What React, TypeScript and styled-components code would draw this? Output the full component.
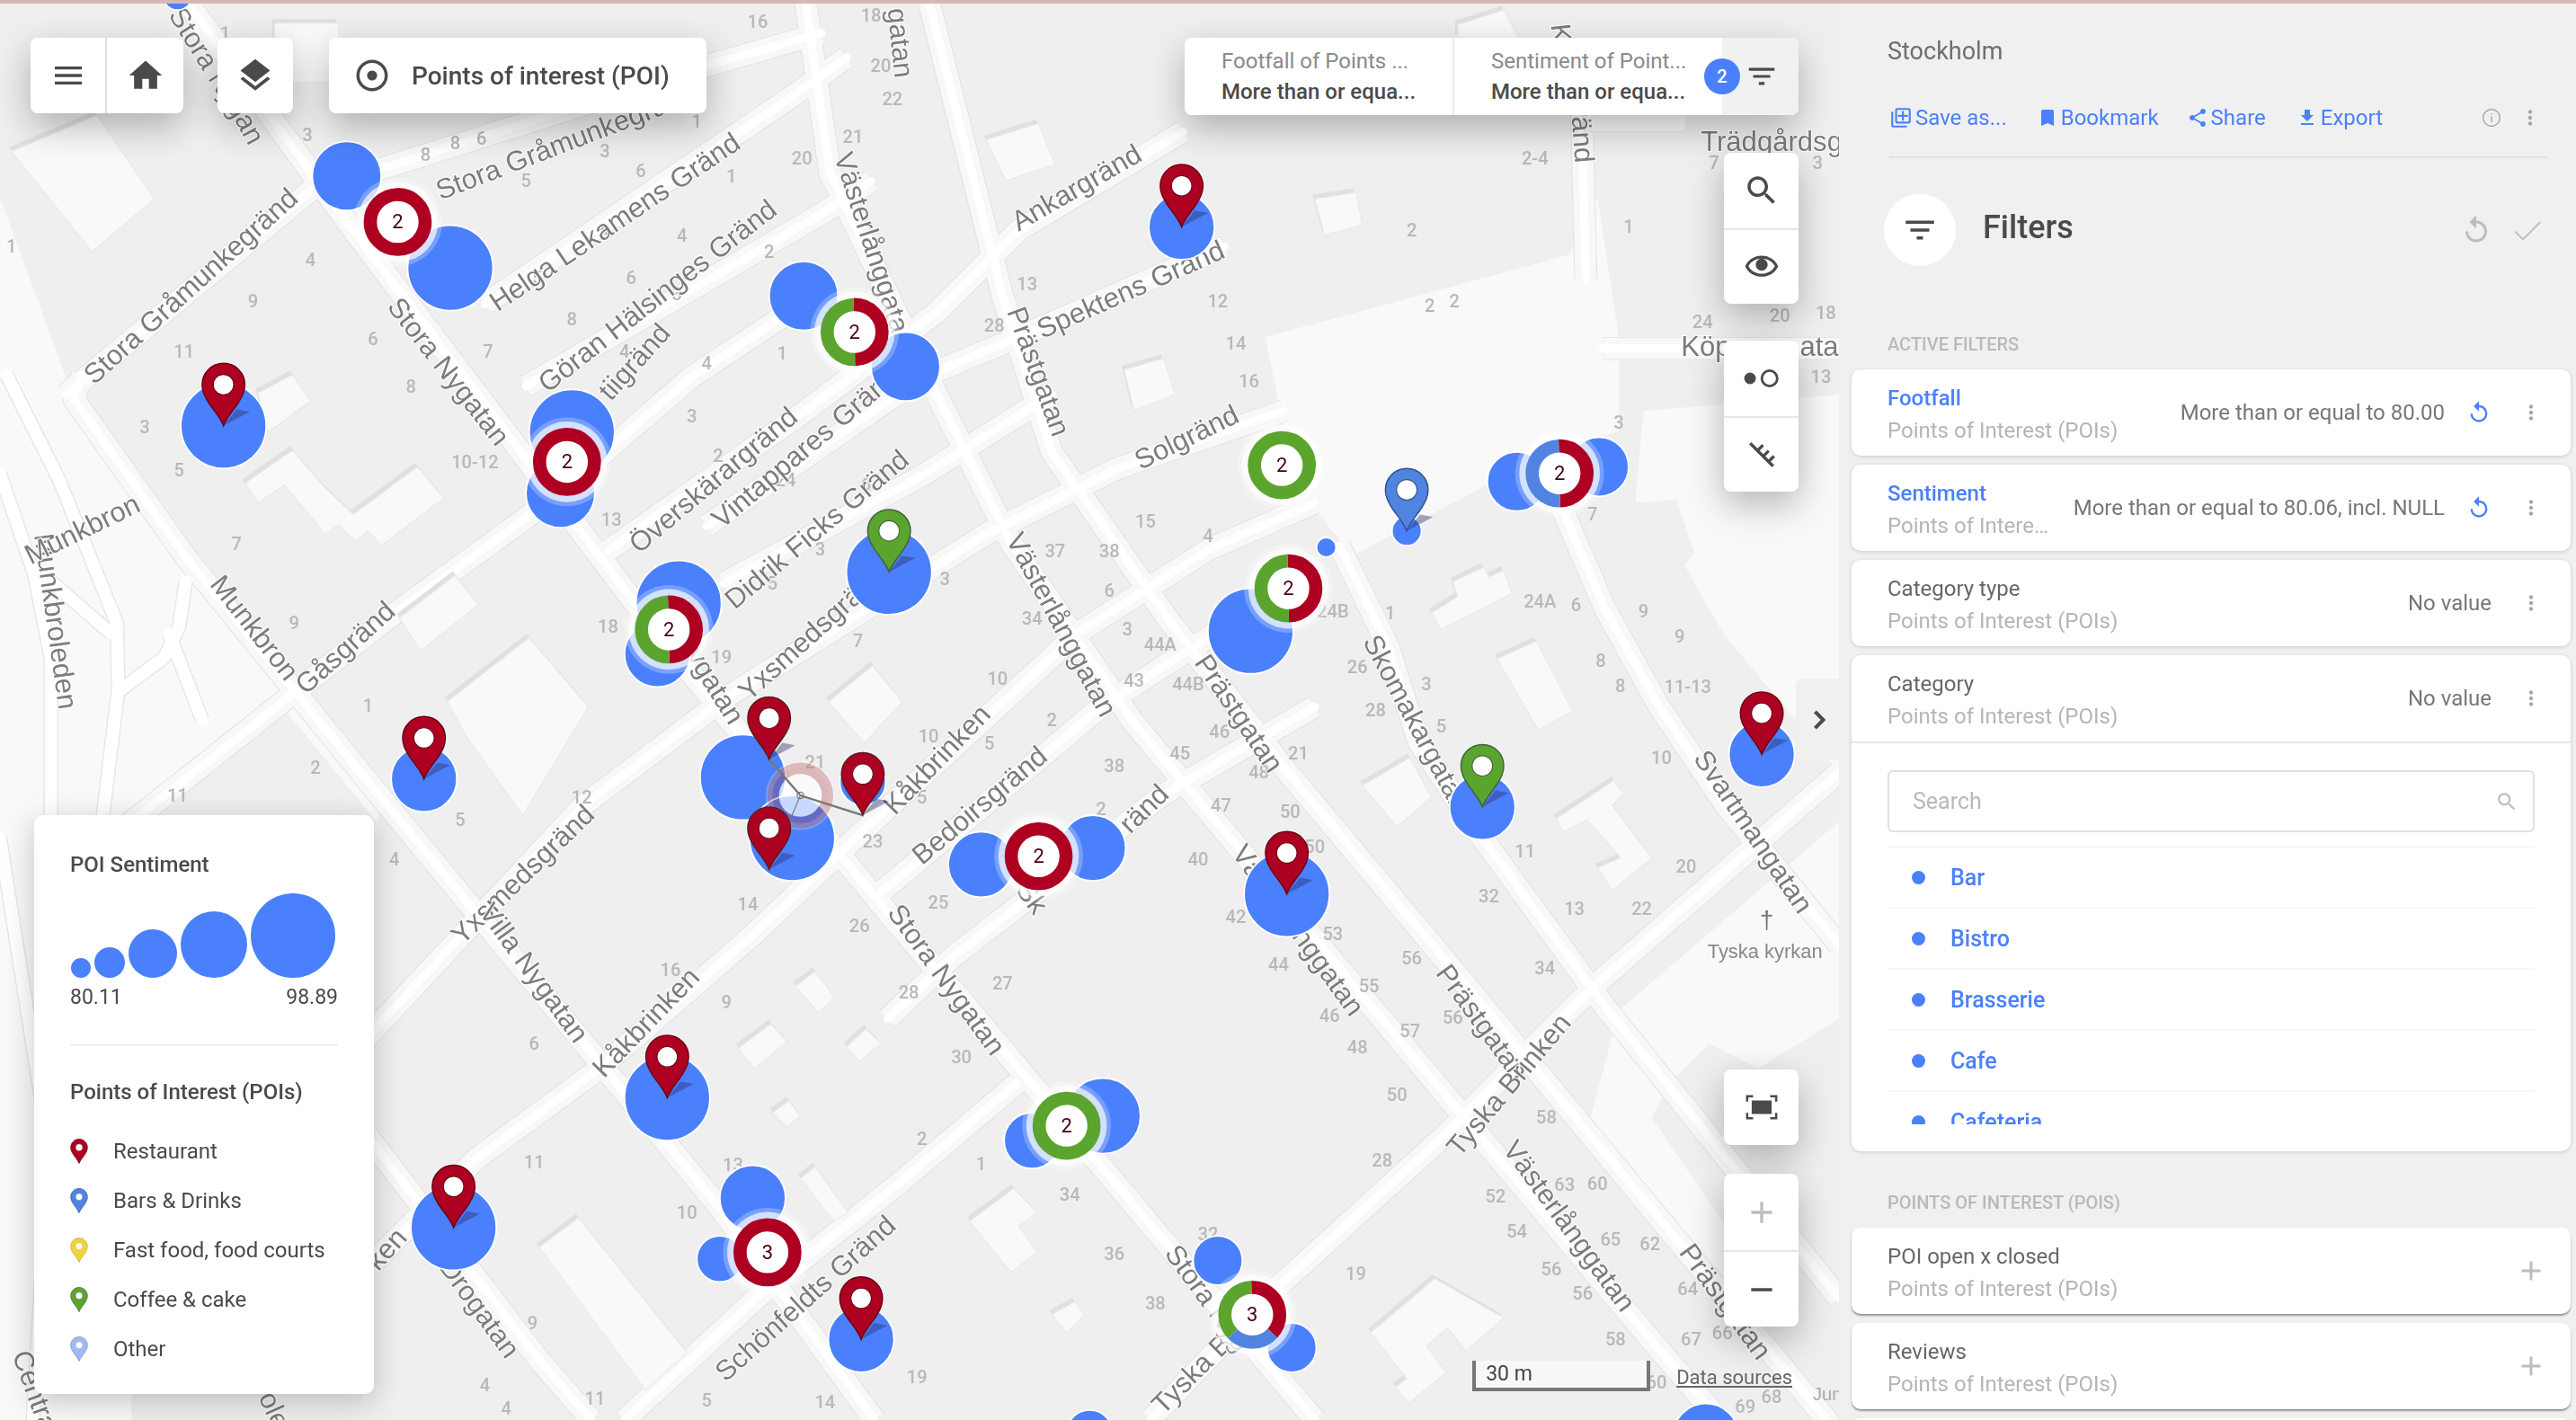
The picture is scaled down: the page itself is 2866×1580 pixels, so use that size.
import React from "react";
import styled, { createGlobalStyle } from "styled-components";

const BLUE = "#4a80fb";
const RED = "#ae0021";
const GREEN = "#5ba52e";
const PINBLUE = "#5084e0";
const INK = "#4a4a4a";

const Global = createGlobalStyle`
  html, body { margin: 0; padding: 0; background: #f0f0f0; overflow: hidden; }
  * { box-sizing: border-box; }
  body { font-family: Roboto, "Liberation Sans", sans-serif; color: ${INK}; }
`;

const Page = styled.div`
  position: relative;
  display: flex;
  width: 2866px;
  height: 1580px;
  overflow: hidden;
`;
const TopLine = styled.div`
  position: absolute;
  top: 0;
  left: 0;
  right: 0;
  height: 4px;
  background: #d9b6b6;
  z-index: 5;
`;
const MapArea = styled.div`
  position: relative;
  width: 2046px;
  height: 1580px;
  flex: none;
  overflow: hidden;
  background: #efefef;
`;
const Canvas = styled.svg`
  position: absolute;
  inset: 0;
  width: 2046px;
  height: 1580px;
`;

/* ---- map drawing data, in a 1119x864 grid ---- */
type P = [number, number];
const mainRoads: P[][] = [
  [[113, 0], [215, 140], [400, 385], [540, 555], [800, 864]],
  [[490, 0], [505, 105], [555, 210], [615, 330], [690, 440], [1000, 810], [1060, 880]],
  [[565, 0], [610, 180], [640, 275], [711, 377], [782, 468], [880, 585], [1050, 790], [1119, 873]],
  [[815, 332], [845, 394], [863, 451], [897, 503], [977, 613], [1119, 790]],
  [[949, 306], [977, 371], [1009, 429], [1050, 490], [1119, 575]],
  [[50, 228], [45, 243], [113, 339], [230, 483], [301, 569], [438, 735], [532, 864]],
  [[215, 680], [330, 830], [360, 864]],
  [[40, 240], [190, 115], [215, 108], [430, 40], [500, 20]],
  [[295, 185], [480, 60], [515, 35]],
  [[320, 235], [500, 130], [530, 110]],
  [[75, 504], [239, 374], [330, 308], [420, 230], [480, 190]],
  [[370, 335], [490, 250], [570, 190], [620, 140], [720, 80]],
  [[430, 320], [560, 230], [620, 205], [745, 150]],
  [[440, 355], [560, 290], [640, 240]],
  [[215, 640], [355, 490], [444, 423], [600, 325], [680, 285], [781, 250]],
  [[225, 770], [290, 705], [365, 650], [458, 569], [514, 516], [656, 385], [736, 334], [800, 306]],
  [[536, 543], [670, 430], [760, 372]],
  [[380, 864], [469, 782], [547, 720], [619, 659]],
  [[540, 620], [580, 582], [707, 484], [800, 430]],
  [[700, 864], [770, 790], [880, 690], [970, 600], [1050, 530], [1119, 470]],
  [[975, 212], [1119, 212]],
  [[962, 50], [965, 170]],
];
const thinRoads: P[][] = [
  [[4, 228], [36, 292], [71, 379], [72, 419], [61, 510]],
  [[0, 288], [21, 350], [31, 401], [31, 510]],
  [[113, 354], [109, 381], [100, 400], [73, 420]],
  [[29, 352], [67, 385]],
  [[103, 386], [123, 438]],
  [[0, 510], [30, 700], [20, 864]],
];
const paleAreas: P[][] = [
  [[0, 120], [45, 243], [113, 339], [230, 483], [230, 864], [0, 864]],
  [[770, 205], [955, 155], [972, 120], [985, 205], [985, 262], [945, 275], [905, 295], [823, 338], [800, 310], [780, 255]],
  [[1000, 250], [1119, 240], [1119, 470], [1049, 386], [1025, 344], [1031, 336], [1020, 304], [995, 306]],
  [[985, 615], [1119, 500], [1119, 620], [1070, 650], [1040, 635], [1015, 660], [1005, 680], [1080, 790], [1060, 810], [968, 680]],
];
const grayBlocks: P[][] = [
  [[80, 500], [170, 428], [320, 610], [240, 864], [80, 864]],
];
const buildings: P[][] = [
  [[7, 92], [59, 70], [94, 121], [56, 153]],
  [[167, 14], [206, 14], [206, 50], [167, 50]],
  [[157, 239], [178, 228], [189, 244], [163, 263]],
  [[149, 294], [178, 274], [198, 297], [215, 313], [254, 284], [270, 303], [232, 332], [224, 323], [216, 329], [206, 319], [198, 325], [173, 295], [157, 306]],
  [[243, 376], [277, 350], [291, 368], [256, 396]],
  [[272, 427], [322, 388], [358, 430], [318, 496], [285, 450]],
  [[328, 759], [352, 741], [418, 823], [393, 846]],
  [[484, 600], [496, 591], [508, 607], [498, 616]],
  [[449, 638], [469, 623], [479, 634], [459, 650]],
  [[515, 637], [527, 626], [536, 635], [523, 646]],
  [[470, 677], [480, 670], [487, 679], [479, 686]],
  [[487, 717], [496, 710], [516, 738], [507, 743]],
  [[590, 743], [617, 723], [631, 738], [620, 746], [631, 762], [615, 774]],
  [[640, 800], [654, 792], [660, 800], [649, 811]],
  [[504, 427], [531, 405], [549, 427], [526, 452]],
  [[871, 373], [887, 363], [884, 354], [903, 345], [906, 351], [915, 347], [920, 361], [877, 383]],
  [[911, 401], [935, 390], [957, 433], [936, 444]],
  [[947, 498], [982, 475], [988, 483], [981, 490], [1005, 522], [981, 542], [972, 528], [986, 522], [966, 499], [951, 506]],
  [[829, 478], [858, 461], [871, 485], [850, 503]],
  [[834, 811], [873, 778], [915, 802], [892, 822], [881, 808], [868, 819], [880, 835], [857, 854], [849, 844], [856, 839]],
  [[800, 121], [825, 117], [829, 137], [806, 143]],
  [[684, 225], [708, 218], [715, 240], [690, 250]],
  [[600, 85], [632, 75], [642, 100], [612, 110]],
  [[887, 15], [915, 6], [924, 23], [887, 23]],
  [[964, 68], [1026, 68], [1026, 80], [964, 80]],
];
const streets: [string, number, number, number, number?][] = [
  ["Stora Nyg", 127, 38, 58],
  ["an", 152, 78, 62],
  ["Stora Gråmunkegrän", 340, 88, -21],
  ["Helga Lekamens Gränd", 374, 135, -34],
  ["Stora Gråmunkegränd", 116, 174, -42],
  ["Göran Hälsinges Gränd", 400, 180, -38],
  ["Västerlånggatan", 532, 152, 72],
  ["Stora Nygatan", 273, 226, 52],
  ["tiigränd", 386, 220, -48],
  ["Överskärargränd", 434, 292, -40],
  ["Vintappares Gränd", 490, 272, -40],
  ["Didrik Ficks Gränd", 497, 322, -40],
  ["Yxsmedsgränd", 494, 385, -42],
  ["Nygatan", 432, 412, 58],
  ["Kåkbrinken", 570, 462, -46],
  ["Bedoirsgränd", 596, 490, -40],
  ["Yxsmedsgränd", 318, 532, -44],
  ["Villa Nygatan", 325, 592, 54],
  ["Kåkbrinken", 393, 622, -46],
  ["Stora Nygatan", 576, 596, 54],
  ["Västerlånggatan", 646, 380, 62],
  ["Prästgatan", 632, 226, 70],
  ["Spektens Gränd", 688, 176, -24],
  ["Ankargränd", 655, 114, -30],
  ["Solgränd", 722, 266, -26],
  ["Prästgatan", 754, 434, 56],
  ["Skomakargatan", 862, 440, 62],
  ["Västerlånggatan", 790, 566, 54],
  ["Prästgatan", 902, 622, 54],
  ["Västerlånggatan", 955, 746, 54],
  ["Tyska Brinken", 918, 660, -50],
  ["Prästgatan", 1050, 792, 54],
  ["Svartmangatan", 1067, 506, 56],
  ["Tyska B", 725, 836, -45],
  ["Stora Nyg", 735, 790, 54],
  ["Schönfeldts Gränd", 490, 790, -42],
  ["ränd", 696, 492, -44],
  ["Sk", 628, 546, 54],
  ["Drogatan", 292, 796, 54],
  ["ken", 235, 760, -48],
  ["Munkbroleden", 34, 378, 82],
  ["Munkbron", 50, 322, -26],
  ["Munkbron", 155, 382, 52],
  ["Gåsgränd", 210, 394, -42],
  ["gatan", 548, 26, 84],
  ["Trädgårdsg", 1078, 86, 0, 17],
  ["Köp", 1038, 211, 0, 17],
  ["ata", 1107, 211, 0, 17],
  ["K", 950, 20, 84],
  ["ränd", 963, 82, 86],
  ["Central", 22, 848, 70],
  ["ole", 167, 858, 66],
];
const houseNumbers: [string, number, number][] = [
  ["16", 461, 13], ["18", 530, 9], ["20", 536, 40], ["22", 543, 60], ["21", 519, 83], ["20", 488, 96], ["1", 424, 74], ["3", 368, 92], ["6", 390, 104], ["1", 445, 107], ["5", 320, 110], ["3", 187, 82], ["8", 259, 94], ["8", 277, 87], ["6", 293, 84], ["1", 137, 20], ["3", 368, 142], ["4", 415, 143], ["2", 468, 153], ["5", 327, 169], ["6", 384, 169], ["3", 412, 179], ["8", 348, 194], ["4", 380, 214], ["4", 430, 221], ["1", 476, 215], ["1", 7, 150], ["4", 189, 158], ["9", 154, 183], ["6", 227, 206], ["7", 297, 214], ["8", 250, 235], ["11", 112, 214], ["3", 88, 260], ["5", 109, 286], ["10-12", 289, 281], ["3", 421, 253], ["2", 437, 277], ["24", 478, 292], ["6", 527, 295],
  ["2-4", 934, 96], ["2", 859, 140], ["1", 991, 138], ["2", 870, 186], ["2", 885, 183], ["7", 1043, 99], ["3", 1106, 99], ["24", 1036, 196], ["20", 1083, 192], ["18", 1111, 190], ["13", 1108, 229], ["3", 985, 257], ["12", 741, 183], ["14", 752, 209], ["16", 760, 232],
  ["13", 625, 173], ["28", 605, 198], ["13", 372, 316], ["37", 642, 335], ["38", 675, 335], ["15", 697, 317], ["6", 675, 359], ["34", 628, 376], ["3", 686, 383], ["44A", 706, 392], ["43", 690, 414], ["44B", 723, 416], ["10", 607, 413], ["2", 640, 438], ["10", 565, 448], ["21", 496, 464], ["5", 602, 452], ["5", 561, 485], ["38", 678, 466], ["45", 718, 458], ["23", 531, 512], ["2", 670, 492], ["40", 729, 523], ["18", 370, 381], ["19", 439, 400], ["14", 455, 550], ["26", 523, 563], ["25", 571, 549], ["7", 522, 390], ["3", 575, 352], ["3", 499, 334], ["5", 470, 355],
  ["4", 735, 326], ["24B", 811, 372], ["1", 846, 373], ["24A", 937, 366], ["6", 959, 368], ["9", 1000, 372], ["9", 1022, 387], ["26", 826, 406], ["3", 868, 416], ["8", 974, 402], ["8", 986, 417], ["11-13", 1027, 418], ["28", 837, 432], ["5", 877, 442], ["46", 742, 445], ["21", 790, 458], ["48", 766, 470], ["47", 743, 490], ["50", 785, 494], ["50", 800, 515], ["10", 1011, 461], ["20", 1026, 527], ["11", 928, 518], ["32", 906, 545], ["13", 958, 553], ["22", 999, 553], ["42", 752, 558], ["53", 811, 568], ["44", 778, 587], ["56", 859, 583], ["55", 833, 600], ["34", 940, 589], ["7", 969, 313],
  ["16", 408, 590], ["9", 442, 610], ["28", 553, 604], ["27", 610, 598], ["6", 325, 635], ["30", 585, 643], ["2", 561, 693], ["1", 597, 708], ["11", 325, 707], ["13", 446, 709], ["10", 418, 738], ["34", 651, 727], ["36", 678, 763], ["38", 703, 793], ["9", 324, 805], ["4", 295, 843], ["4", 308, 857], ["11", 362, 851], ["5", 430, 852], ["14", 502, 853], ["19", 558, 838],
  ["46", 809, 618], ["48", 826, 637], ["57", 858, 627], ["56", 884, 619], ["50", 850, 666], ["58", 941, 680], ["28", 841, 706], ["52", 910, 728], ["63", 952, 721], ["60", 972, 720], ["54", 923, 749], ["65", 980, 754], ["62", 1004, 757], ["56", 944, 772], ["56", 963, 787], ["19", 825, 775], ["58", 983, 815], ["64", 1027, 784], ["67", 1029, 815], ["66", 1048, 811], ["60", 1008, 841], ["68", 1078, 850], ["69", 1062, 856], ["32", 735, 751],
  ["7", 144, 331], ["9", 179, 379], ["1", 224, 429], ["2", 192, 467], ["11", 108, 484], ["5", 280, 499], ["4", 240, 523], ["12", 354, 485],
];
const bubbles: [number, number, number][] = [
  [108, -3, 9], [211, 107, 21], [274, 163, 26], [136, 259, 26], [489, 180, 21], [551, 223, 21], [348, 263, 26], [341, 300, 21], [541, 348, 26], [413, 367, 26], [400, 398, 20], [258, 474, 20], [452, 473, 26], [482, 510, 26], [525, 476, 14], [597, 526, 20], [665, 516, 20], [719, 138, 20], [761, 384, 26], [856, 323, 9], [807, 333, 6], [923, 293, 18], [973, 284, 18], [1072, 459, 20], [902, 491, 20], [783, 544, 26], [406, 668, 26], [276, 747, 26], [458, 729, 20], [438, 766, 14], [524, 815, 20], [628, 694, 17], [671, 679, 23], [741, 767, 15], [786, 820, 15], [663, 872, 14], [1038, 874, 20],
];
type Seg = [string, number];
const clusters: [number, number, string, Seg[]][] = [
  [242, 135, "2", [[RED, 1]]],
  [345, 281, "2", [[RED, 1]]],
  [520, 202, "2", [[RED, 0.5], [GREEN, 0.5]]],
  [407, 383, "2", [[RED, 0.5], [GREEN, 0.5]]],
  [780, 283, "2", [[GREEN, 1]]],
  [784, 358, "2", [[RED, 0.5], [GREEN, 0.5]]],
  [949, 288, "2", [[RED, 0.5], [PINBLUE, 0.5]]],
  [632, 521, "2", [[RED, 1]]],
  [467, 762, "3", [[RED, 1]]],
  [649, 685, "2", [[GREEN, 1]]],
  [762, 800, "3", [[RED, 0.37], [PINBLUE, 0.26], [GREEN, 0.37]]],
];
const pins: [number, number, string, string][] = [
  [136, 259, RED, "#6a0014"], [719, 138, RED, "#6a0014"], [541, 348, GREEN, "#44603a"], [856, 323, PINBLUE, "#34508e"], [258, 474, RED, "#6a0014"], [468, 462, RED, "#5a1a20"], [525, 496, RED, "#5a1a20"], [468, 529, RED, "#5a1a20"], [902, 491, GREEN, "#44603a"], [783, 544, RED, "#6a0014"], [1072, 459, RED, "#6a0014"], [406, 668, RED, "#6a0014"], [276, 747, RED, "#6a0014"], [524, 815, RED, "#6a0014"],
];

const pts = (a: P[]) => a.map((p) => p.join(",")).join(" ");
const PIN_PATH = "M13 0C5.8 0 0 5.8 0 13c0 4.2 1.6 7 3.6 10.4C6.6 28.2 11 32.6 13 38c2-5.4 6.4-9.8 9.4-14.6C24.4 20 26 17.2 26 13 26 5.8 20.2 0 13 0z";

function MapBase() {
  return (
    <Canvas viewBox="0 0 1119 864">
      <defs>
        <filter id="soft" x="0" y="0" width="100%" height="100%">
          <feGaussianBlur stdDeviation="0.35" />
        </filter>
      </defs>
      <g filter="url(#soft)">
        {paleAreas.map((a, i) => <polygon key={i} points={pts(a)} fill="#f8f9f8" />)}
        {grayBlocks.map((a, i) => <polygon key={i} points={pts(a)} fill="#efefef" />)}
        {mainRoads.map((r, i) => <polyline key={i} points={pts(r)} fill="none" stroke="#e0e0e0" strokeWidth={14} strokeLinejoin="round" />)}
        {mainRoads.map((r, i) => <polyline key={i} points={pts(r)} fill="none" stroke="#f7f8f7" strokeWidth={13} strokeLinejoin="round" />)}
        {mainRoads.map((r, i) => <polyline key={i} points={pts(r)} fill="none" stroke="#fff" strokeWidth={5} strokeLinejoin="round" strokeLinecap="round" />)}
        {thinRoads.map((r, i) => <polyline key={i} points={pts(r)} fill="none" stroke="#e6e6e6" strokeWidth={9} strokeLinejoin="round" />)}
        {thinRoads.map((r, i) => <polyline key={i} points={pts(r)} fill="none" stroke="#fff" strokeWidth={7.5} strokeLinejoin="round" strokeLinecap="round" />)}
        {buildings.map((b, i) => (
          <g key={i}>
            <polygon points={pts(b)} fill="#e0e0e0" transform="translate(-1.5,-2.5)" />
            <polygon points={pts(b)} fill="#f8f9f8" stroke="#e9e9e9" strokeWidth={0.6} />
          </g>
        ))}
        {houseNumbers.map(([t, x, y], i) => (
          <text key={i} x={x} y={y} textAnchor="middle" dominantBaseline="central" fontFamily="Roboto, sans-serif" fontWeight={500} fontSize={11} fill="#b8b8b8">{t}</text>
        ))}
        {streets.map(([t, x, y, r, s], i) => (
          <text key={i} x={x} y={y} transform={`rotate(${r} ${x} ${y})`} textAnchor="middle" dominantBaseline="central" fontFamily="'Liberation Sans', sans-serif" fontSize={s || 17} fill="#7c7c7c" stroke="#fff" strokeWidth={1.2} style={{ paintOrder: "stroke" }}>{t}</text>
        ))}
        <text x={1075} y={565} textAnchor="middle" fontFamily="'Liberation Sans', sans-serif" fontSize={15} fill="#777">†</text>
        <text x={1074} y={583} textAnchor="middle" fontFamily="'Liberation Sans', sans-serif" fontSize={12} fill="#888">Tyska kyrkan</text>
        <text x={1112} y={852} textAnchor="middle" fontFamily="'Liberation Sans', sans-serif" fontSize={11} fill="#aaa">Jun</text>
      </g>
    </Canvas>
  );
}

function Cluster({ x, y, label, segs }: { x: number; y: number; label: string; segs: Seg[] }) {
  let from = 0;
  return (
    <g transform={`translate(${x} ${y})`}>
      <circle r={27} fill="#fff" opacity={0.25} />
      <circle r={24.5} fill="#fff" opacity={0.68} />
      <circle r={13} fill="#fff" />
      <g transform="rotate(-90)">
        {segs.map(([c, f], i) => {
          const el = <circle key={i} r={16.7} fill="none" stroke={c} strokeWidth={8} pathLength={100} strokeDasharray={`${f * 100} ${100 - f * 100}`} strokeDashoffset={-from * 100} />;
          from += f;
          return el;
        })}
      </g>
      <text textAnchor="middle" dominantBaseline="central" fontFamily="Roboto, sans-serif" fontSize={12} fill="#45000e">{label}</text>
    </g>
  );
}

function Pin({ x, y, fill, edge }: { x: number; y: number; fill: string; edge: string }) {
  return (
    <g transform={`translate(${x} ${y})`}>
      <polygon points="0,0 16,-8.5 8,-10" fill="#2a2f6a" opacity={0.42} />
      <g transform="translate(-13 -38)">
        <path d={PIN_PATH} fill={fill} stroke={edge} strokeWidth={0.8} />
        <circle cx={13} cy={13} r={6.2} fill="#fff" stroke={edge} strokeWidth={0.6} />
      </g>
    </g>
  );
}

function MapMarkers() {
  const hub: P = [487, 484];
  return (
    <Canvas viewBox="0 0 1119 864">
      {bubbles.map(([x, y, r], i) => <circle key={i} cx={x} cy={y} r={r} fill={BLUE} stroke="#fff" strokeWidth={1} />)}
      {clusters.map(([x, y, l, s], i) => <Cluster key={i} x={x} y={y} label={l} segs={s} />)}
      <circle cx={hub[0]} cy={hub[1]} r={19} fill="none" stroke="#fff" strokeOpacity={0.25} strokeWidth={4} />
      <circle cx={hub[0]} cy={hub[1]} r={16.5} fill="none" stroke="#a8383e" strokeOpacity={0.3} strokeWidth={7} />
      <circle cx={hub[0]} cy={hub[1]} r={13} fill="#fff" fillOpacity={0.7} />
      {[[468, 462], [525, 496], [468, 529]].map(([x, y], i) => (
        <line key={i} x1={hub[0]} y1={hub[1]} x2={x} y2={y} stroke="#777" strokeWidth={i === 2 ? 0.6 : 1.3} />
      ))}
      <circle cx={hub[0]} cy={hub[1]} r={2} fill="none" stroke="#777" strokeWidth={0.7} />
      {pins.map(([x, y, f, e], i) => <Pin key={i} x={x} y={y} fill={f} edge={e} />)}
    </Canvas>
  );
}

/* ---- icons ---- */
const Glyph = styled.svg<{ $size: number; $color?: string }>`
  width: ${(p) => p.$size}px;
  height: ${(p) => p.$size}px;
  fill: ${(p) => p.$color || INK};
  flex: none;
  display: block;
`;
function Icon({ d, size, color }: { d: string; size: number; color?: string }) {
  return <Glyph viewBox="0 0 24 24" $size={size} $color={color}><path d={d} /></Glyph>;
}
const IC = {
  menu: "M3 18h18v-2H3v2zm0-5h18v-2H3v2zm0-7v2h18V6H3z",
  home: "M10 20v-6h4v6h5v-8h3L12 3 2 12h3v8z",
  layers: "M11.99 18.54l-7.37-5.73L3 14.07l9 7 9-7-1.63-1.27-7.38 5.74zM12 16l7.36-5.73L21 9l-9-7-9 7 1.63 1.27L12 16z",
  target: "M12 8.8a3.2 3.2 0 1 0 0 6.4 3.2 3.2 0 0 0 0-6.4zM12 2C6.48 2 2 6.48 2 12s4.48 10 10 10 10-4.48 10-10S17.52 2 12 2zm0 18c-4.42 0-8-3.58-8-8s3.58-8 8-8 8 3.58 8 8-3.58 8-8 8z",
  filter: "M10 18h4v-2h-4v2zM3 6v2h18V6H3zm3 7h12v-2H6v2z",
  search: "M15.5 14h-.79l-.28-.27C15.41 12.59 16 11.11 16 9.5 16 5.91 13.09 3 9.5 3S3 5.91 3 9.5 5.91 16 9.5 16c1.61 0 3.09-.59 4.23-1.57l.27.28v.79l5 4.99L20.49 19l-4.99-5zm-6 0C7.01 14 5 11.99 5 9.5S7.01 5 9.5 5 14 7.01 14 9.5 11.99 14 9.5 14z",
  eye: "M12 6.5c3.79 0 7.17 1.9 8.82 5-1.65 3.1-5.03 5-8.82 5s-7.17-1.9-8.82-5c1.65-3.1 5.03-5 8.82-5m0-2C7 4.5 2.73 7.4 1 11.5c1.73 4.1 6 7 11 7s9.27-2.9 11-7c-1.73-4.1-6-7-11-7zm0 2a4 4 0 0 0-4 4 4 4 0 0 0 8 0 4 4 0 0 0-4-4z",
  dots: "M4.6 8.3a3.7 3.7 0 1 0 0 7.4 3.7 3.7 0 0 0 0-7.4zM17 6.3a5.7 5.7 0 1 0 0 11.4 5.7 5.7 0 0 0 0-11.4zm0 1.6a4.1 4.1 0 1 1 0 8.2 4.1 4.1 0 0 1 0-8.2z",
  ruler: "M4 5.4L5.4 4 20 18.6 18.6 20zM9.2 8.2l3-3 1.3 1.3-3 3zM12.8 11.8l3-3 1.3 1.3-3 3zM16.2 15.2l3-3 1.3 1.3-3 3z",
  frame: "M5 7.2h14v9.6H5zM1 8V3.5h5v1.6H2.6V8zM18 3.5h5V8h-1.6V5.1H18zM1 16v4.5h5v-1.6H2.6V16zM18 20.5h5V16h-1.6v2.9H18z",
  plus: "M19 13h-6v6h-2v-6H5v-2h6V5h2v6h6v2z",
  minus: "M19 13H5v-2h14v2z",
  saveAs: "M4 6H2v14c0 1.1.9 2 2 2h14v-2H4V6zm16-4H8c-1.1 0-2 .9-2 2v12c0 1.1.9 2 2 2h12c1.1 0 2-.9 2-2V4c0-1.1-.9-2-2-2zm0 14H8V4h12v12zm-1-7h-4V5h-2v4H9v2h4v4h2v-4h4z",
  bookmark: "M17 3H7c-1.1 0-1.99.9-1.99 2L5 21l7-3 7 3V5c0-1.1-.9-2-2-2z",
  share: "M18 16.08c-.76 0-1.44.3-1.96.77L8.91 12.7c.05-.23.09-.46.09-.7s-.04-.47-.09-.7l7.05-4.11c.54.5 1.25.81 2.04.81 1.66 0 3-1.34 3-3s-1.34-3-3-3-3 1.34-3 3c0 .24.04.47.09.7L8.04 9.81C7.5 9.31 6.79 9 6 9c-1.66 0-3 1.34-3 3s1.34 3 3 3c.79 0 1.5-.31 2.04-.81l7.12 4.16c-.05.21-.08.43-.08.65 0 1.61 1.31 2.92 2.92 2.92 1.61 0 2.92-1.31 2.92-2.92s-1.31-2.92-2.92-2.92z",
  download: "M19 9h-4V3H9v6H5l7 7 7-7zM5 18v2h14v-2H5z",
  info: "M11.3 7h1.4v1.6h-1.4zm0 3.4h1.4V17h-1.4zM12 2C6.48 2 2 6.48 2 12s4.48 10 10 10 10-4.48 10-10S17.52 2 12 2zm0 18.6c-4.74 0-8.6-3.86-8.6-8.6S7.26 3.4 12 3.4s8.6 3.86 8.6 8.6-3.86 8.6-8.6 8.6z",
  more: "M12 8c1.1 0 2-.9 2-2s-.9-2-2-2-2 .9-2 2 .9 2 2 2zm0 2c-1.1 0-2 .9-2 2s.9 2 2 2 2-.9 2-2-.9-2-2-2zm0 6c-1.1 0-2 .9-2 2s.9 2 2 2 2-.9 2-2-.9-2-2-2z",
  replay: "M12 5V1L7 6l5 5V7c3.31 0 6 2.69 6 6s-2.69 6-6 6-6-2.69-6-6H4c0 4.42 3.58 8 8 8s8-3.58 8-8-3.58-8-8-8z",
  check: "M9 17.4L4.2 12.6l-.8.8L9 19 21 7l-.8-.8z",
  chevron: "M8.6 5.4L11 3l9 9-9 9-2.4-2.4L15.2 12z",
};

/* ---- floating map controls ---- */
const Float = styled.div`
  position: absolute;
  display: flex;
  z-index: 2;
`;
const TopLeft = styled(Float)`
  top: 42px;
  left: 34px;
  gap: 40px;
`;
const TopLeftGroup = styled.div`
  display: flex;
  gap: 38px;
`;
const Surface = styled.div`
  display: flex;
  background: #fff;
  border-radius: 8px;
  box-shadow: 0 14px 40px rgba(0, 0, 0, 0.28);
  overflow: hidden;
`;
const SquareButton = styled.div<{ $w?: number; $split?: boolean }>`
  width: ${(p) => p.$w || 85}px;
  height: 84px;
  display: flex;
  align-items: center;
  justify-content: center;
  flex: none;
  border-right: ${(p) => (p.$split ? "2px solid #dcdcdc" : "none")};
`;
const PoiButton = styled(Surface)`
  width: 420px;
  height: 84px;
  align-items: center;
  padding-left: 27px;
  gap: 23px;
  font-size: 28px;
  font-weight: 500;
  color: ${INK};
`;
const FilterBar = styled(Float)`
  top: 42px;
  right: 45px;
`;
const FilterSurface = styled(Surface)`
  height: 86px;
  overflow: visible;
`;
const Chip = styled.div<{ $w: number }>`
  width: ${(p) => p.$w}px;
  padding-left: 41px;
  display: flex;
  flex-direction: column;
  justify-content: center;
  gap: 8px;
  font-size: 24px;
  line-height: 26px;
  & + & {
    border-left: 2px solid #ececec;
  }
`;
const ChipLabel = styled.span`
  color: #8a8a8a;
`;
const ChipValue = styled.span`
  font-weight: 500;
  color: ${INK};
`;
const FilterEnd = styled.div`
  width: 85px;
  position: relative;
  background: #f1f1f1;
  border-radius: 0 8px 8px 0;
  display: flex;
  align-items: center;
  justify-content: flex-end;
  padding-right: 22px;
`;
const Badge = styled.span`
  position: absolute;
  left: -20px;
  top: 23px;
  width: 40px;
  height: 40px;
  border-radius: 50%;
  background: ${BLUE};
  color: #fff;
  font-size: 20px;
  font-weight: 500;
  display: flex;
  align-items: center;
  justify-content: center;
`;
const FilterChips = styled.div`
  display: flex;
  background: #fff;
  border-radius: 8px 0 0 8px;
`;
const RightTools = styled(Float)`
  top: 170px;
  right: 45px;
  flex-direction: column;
  gap: 41px;
`;
const BottomTools = styled(Float)`
  top: 1190px;
  right: 45px;
  flex-direction: column;
  gap: 32px;
`;
const Stack = styled(Surface)`
  flex-direction: column;
  width: 83px;
`;
const StackButton = styled.div<{ $h: number }>`
  height: ${(p) => p.$h}px;
  display: flex;
  align-items: center;
  justify-content: center;
  & + & {
    border-top: 2px solid #e6e6e6;
  }
`;
const Collapse = styled.div`
  position: absolute;
  top: 755px;
  right: 0;
  width: 48px;
  height: 91px;
  background: #f0f0f0;
  border-radius: 8px 0 0 8px;
  display: flex;
  align-items: center;
  justify-content: center;
  z-index: 2;
`;
const Attribution = styled(Float)`
  bottom: 32px;
  right: 52px;
  gap: 29px;
  align-items: flex-end;
`;
const ScaleBar = styled.div`
  width: 198px;
  height: 34px;
  border: 4px solid #777;
  border-top: none;
  background: rgba(255, 255, 255, 0.55);
  font-size: 23px;
  line-height: 30px;
  padding-left: 11px;
  color: #444;
`;
const Sources = styled.span`
  font-size: 22px;
  line-height: 26px;
  color: #666;
  text-decoration: underline;
  margin-bottom: 2px;
`;

/* ---- legend ---- */
const Legend = styled(Float)`
  top: 907px;
  left: 38px;
  width: 378px;
  height: 644px;
  flex-direction: column;
  padding: 40px 40px 0;
  background: #fff;
  border-radius: 10px;
  box-shadow: 0 8px 34px rgba(0, 0, 0, 0.22);
`;
const LegendTitle = styled.div`
  font-size: 24px;
  font-weight: 500;
  line-height: 30px;
  color: ${INK};
  white-space: nowrap;
`;
const SizeScale = styled.div`
  display: flex;
  align-items: flex-end;
  gap: 4px;
  margin-top: 15px;
  height: 96px;
  padding-left: 1px;
`;
const SizeDot = styled.span<{ $d: number }>`
  width: ${(p) => p.$d}px;
  height: ${(p) => p.$d}px;
  border-radius: 50%;
  background: ${BLUE};
  flex: none;
`;
const SizeLabels = styled.div`
  display: flex;
  justify-content: space-between;
  font-size: 23px;
  line-height: 28px;
  margin-top: 8px;
  color: ${INK};
  padding-bottom: 38px;
  border-bottom: 2px solid #f0f0f0;
  margin-bottom: 36px;
`;
const LegendList = styled.div`
  display: flex;
  flex-direction: column;
  margin-top: 23px;
`;
const LegendRow = styled.div`
  display: flex;
  align-items: center;
  height: 55px;
  gap: 28px;
  font-size: 24px;
  color: ${INK};
  white-space: nowrap;
`;
const LegendPin = styled.svg`
  width: 20px;
  height: 30px;
  flex: none;
`;

/* ---- filter panel ---- */
const Panel = styled.aside`
  position: relative;
  width: 820px;
  height: 1580px;
  flex: none;
  overflow: hidden;
  background: #f0f0f0;
  display: flex;
  flex-direction: column;
`;
const City = styled.div`
  flex: none;
  height: 110px;
  padding: 4px 0 0 54px;
  display: flex;
  align-items: center;
  font-size: 27px;
  color: #6e6e6e;
`;
const Actions = styled.div`
  flex: none;
  height: 66px;
  margin: 0 32px 0 56px;
  padding-bottom: 22px;
  display: flex;
  align-items: center;
  border-bottom: 2px solid #e2e2e2;
`;
const ActionLink = styled.span<{ $gap: number }>`
  display: flex;
  align-items: center;
  gap: 3px;
  margin-right: ${(p) => p.$gap}px;
  font-size: 24px;
  color: ${BLUE};
  white-space: nowrap;
`;
const ActionEnd = styled.div`
  margin-left: auto;
  display: flex;
  align-items: center;
  gap: 18px;
  padding-right: 6px;
`;
const FiltersHead = styled.div`
  flex: none;
  margin: 40px 34px 0 50px;
  height: 80px;
  display: flex;
  align-items: center;
`;
const FilterDisc = styled.div`
  width: 80px;
  height: 80px;
  border-radius: 50%;
  background: #fff;
  display: flex;
  align-items: center;
  justify-content: center;
  flex: none;
`;
const FiltersTitle = styled.h2`
  margin: 0 0 6px 30px;
  font-size: 36px;
  font-weight: 500;
  color: ${INK};
`;
const HeadActions = styled.div`
  margin-left: auto;
  display: flex;
  align-items: center;
  gap: 19px;
`;
const SectionLabel = styled.div<{ $top: number }>`
  flex: none;
  height: 24px;
  margin: ${(p) => p.$top}px 0 16px 54px;
  font-size: 20px;
  line-height: 24px;
  font-weight: 500;
  color: #b9b9b9;
  text-transform: uppercase;
`;
const Cards = styled.div`
  flex: none;
  margin: 0 6px 0 14px;
  display: flex;
  flex-direction: column;
  gap: 10px;
`;
const Card = styled.div<{ $deep?: boolean }>`
  background: #fff;
  border-radius: 10px;
  box-shadow: ${(p) => (p.$deep ? "0 2px 2px rgba(0, 0, 0, 0.38)" : "0 1px 4px rgba(0, 0, 0, 0.16)")};
`;
const CardHead = styled.div`
  height: 96px;
  padding: 0 32px 0 40px;
  display: flex;
  align-items: center;
`;
const CardText = styled.div`
  flex: 1;
  min-width: 0;
  padding-top: 4px;
  display: flex;
  flex-direction: column;
`;
const CardTitle = styled.div<{ $active?: boolean }>`
  font-size: 24px;
  line-height: 36px;
  font-weight: ${(p) => (p.$active ? 500 : 400)};
  color: ${(p) => (p.$active ? BLUE : "#666")};
`;
const CardSub = styled.div`
  font-size: 24px;
  line-height: 36px;
  color: #b5b5b5;
  white-space: nowrap;
  overflow: hidden;
  text-overflow: ellipsis;
`;
const CardValue = styled.div`
  flex: none;
  margin-left: 16px;
  font-size: 24px;
  color: #777;
  white-space: nowrap;
`;
const ResetSlot = styled.div`
  flex: none;
  margin-left: 24px;
  width: 28px;
  display: flex;
  justify-content: center;
`;
const MoreSlot = styled.div`
  flex: none;
  margin-left: 32px;
  width: 24px;
  display: flex;
  justify-content: center;
`;
const AddSlot = styled.div`
  flex: none;
  width: 36px;
  margin-right: -6px;
  display: flex;
  justify-content: center;
`;
const CardBody = styled.div`
  border-top: 2px solid #e6e6e6;
  padding: 30px 40px 30px;
`;
const SearchBox = styled.div`
  height: 69px;
  border: 2px solid #e0e0e0;
  border-radius: 6px;
  display: flex;
  align-items: center;
  justify-content: space-between;
  padding: 0 16px 0 26px;
  font-size: 25px;
  color: #b9b9b9;
`;
const OptionList = styled.div`
  height: 310px;
  margin-top: 15px;
  overflow: hidden;
`;
const OptionRow = styled.div`
  height: 68px;
  border-top: 2px solid #f6f6f6;
  padding-left: 27px;
  display: flex;
  align-items: center;
  gap: 28px;
  font-size: 25px;
  font-weight: 500;
  color: ${BLUE};
`;
const OptionDot = styled.span`
  width: 15px;
  height: 15px;
  border-radius: 50%;
  background: ${BLUE};
  flex: none;
`;

const legendItems: [string, string, string][] = [
  ["Restaurant", RED, "#6a0014"],
  ["Bars & Drinks", PINBLUE, "#34508e"],
  ["Fast food, food courts", "#f0d23c", "#c9ae2a"],
  ["Coffee & cake", GREEN, "#44603a"],
  ["Other", "#9dbcf0", "#6f8cbd"],
];
const options = ["Bar", "Bistro", "Brasserie", "Cafe", "Cafeteria"];
const GREY_ICON = "#bdbdbd";
const MORE_ICON = "#a6a6a6";

function FilterCard({ title, sub, value, active }: { title: string; sub: string; value: string; active?: boolean }) {
  return (
    <CardHead>
      <CardText>
        <CardTitle $active={active}>{title}</CardTitle>
        <CardSub>{sub}</CardSub>
      </CardText>
      <CardValue>{value}</CardValue>
      {active && <ResetSlot><Icon d={IC.replay} size={28} color={BLUE} /></ResetSlot>}
      <MoreSlot><Icon d={IC.more} size={26} color={MORE_ICON} /></MoreSlot>
    </CardHead>
  );
}

function AddCard({ title }: { title: string }) {
  return (
    <Card $deep>
      <CardHead>
        <CardText>
          <CardTitle>{title}</CardTitle>
          <CardSub>Points of Interest (POIs)</CardSub>
        </CardText>
        <AddSlot><Icon d={IC.plus} size={36} color={GREY_ICON} /></AddSlot>
      </CardHead>
    </Card>
  );
}

export default function App() {
  return (
    <Page>
      <Global />
      <TopLine />
      <MapArea>
        <MapBase />
        <MapMarkers />

        <TopLeft>
          <TopLeftGroup>
            <Surface>
              <SquareButton $split><Icon d={IC.menu} size={40} /></SquareButton>
              <SquareButton><Icon d={IC.home} size={44} /></SquareButton>
            </Surface>
            <Surface>
              <SquareButton $w={84}><Icon d={IC.layers} size={44} /></SquareButton>
            </Surface>
          </TopLeftGroup>
          <PoiButton>
            <Icon d={IC.target} size={42} />
            <span>Points of interest (POI)</span>
          </PoiButton>
        </TopLeft>

        <FilterBar>
          <FilterSurface>
            <FilterChips>
              <Chip $w={298}>
                <ChipLabel>Footfall of Points ...</ChipLabel>
                <ChipValue>More than or equa...</ChipValue>
              </Chip>
              <Chip $w={300}>
                <ChipLabel>Sentiment of Point...</ChipLabel>
                <ChipValue>More than or equa...</ChipValue>
              </Chip>
            </FilterChips>
            <FilterEnd>
              <Badge>2</Badge>
              <Icon d={IC.filter} size={38} />
            </FilterEnd>
          </FilterSurface>
        </FilterBar>

        <RightTools>
          <Stack>
            <StackButton $h={84}><Icon d={IC.search} size={42} /></StackButton>
            <StackButton $h={84}><Icon d={IC.eye} size={40} /></StackButton>
          </Stack>
          <Stack>
            <StackButton $h={84}><Icon d={IC.dots} size={42} /></StackButton>
            <StackButton $h={84}><Icon d={IC.ruler} size={42} /></StackButton>
          </Stack>
        </RightTools>

        <BottomTools>
          <Stack>
            <StackButton $h={84}><Icon d={IC.frame} size={38} /></StackButton>
          </Stack>
          <Stack>
            <StackButton $h={85}><Icon d={IC.plus} size={40} color={GREY_ICON} /></StackButton>
            <StackButton $h={85}><Icon d={IC.minus} size={40} /></StackButton>
          </Stack>
        </BottomTools>

        <Collapse><Icon d={IC.chevron} size={28} /></Collapse>

        <Attribution>
          <ScaleBar>30 m</ScaleBar>
          <Sources>Data sources</Sources>
        </Attribution>

        <Legend>
          <LegendTitle>POI Sentiment</LegendTitle>
          <SizeScale>
            <SizeDot $d={22} />
            <SizeDot $d={34} />
            <SizeDot $d={54} />
            <SizeDot $d={74} />
            <SizeDot $d={94} />
          </SizeScale>
          <SizeLabels>
            <span>80.11</span>
            <span>98.89</span>
          </SizeLabels>
          <LegendTitle>Points of Interest (POIs)</LegendTitle>
          <LegendList>
            {legendItems.map(([label, fill, edge]) => (
              <LegendRow key={label}>
                <LegendPin viewBox="-1 -1 28 40">
                  <path d={PIN_PATH} fill={fill} stroke={edge} strokeWidth={1} />
                  <circle cx={13} cy={13} r={5.5} fill="#fff" stroke={edge} strokeWidth={0.6} />
                </LegendPin>
                <span>{label}</span>
              </LegendRow>
            ))}
          </LegendList>
        </Legend>
      </MapArea>

      <Panel>
        <City>Stockholm</City>
        <Actions>
          <ActionLink $gap={33}><Icon d={IC.saveAs} size={26} color={BLUE} />Save as...</ActionLink>
          <ActionLink $gap={31}><Icon d={IC.bookmark} size={24} color={BLUE} />Bookmark</ActionLink>
          <ActionLink $gap={34}><Icon d={IC.share} size={24} color={BLUE} />Share</ActionLink>
          <ActionLink $gap={0}><Icon d={IC.download} size={24} color={BLUE} />Export</ActionLink>
          <ActionEnd>
            <Icon d={IC.info} size={24} color={MORE_ICON} />
            <Icon d={IC.more} size={26} color={MORE_ICON} />
          </ActionEnd>
        </Actions>
        <FiltersHead>
          <FilterDisc><Icon d={IC.filter} size={42} /></FilterDisc>
          <FiltersTitle>Filters</FiltersTitle>
          <HeadActions>
            <Icon d={IC.replay} size={36} color={GREY_ICON} />
            <Icon d={IC.check} size={40} color={GREY_ICON} />
          </HeadActions>
        </FiltersHead>

        <SectionLabel $top={75}>Active filters</SectionLabel>
        <Cards>
          <Card><FilterCard active title="Footfall" sub="Points of Interest (POIs)" value="More than or equal to 80.00" /></Card>
          <Card><FilterCard active title="Sentiment" sub="Points of Interest (POIs)" value="More than or equal to 80.06, incl. NULL" /></Card>
          <Card><FilterCard title="Category type" sub="Points of Interest (POIs)" value="No value" /></Card>
          <Card>
            <FilterCard title="Category" sub="Points of Interest (POIs)" value="No value" />
            <CardBody>
              <SearchBox>
                Search
                <Icon d={IC.search} size={26} color={GREY_ICON} />
              </SearchBox>
              <OptionList>
                {options.map((o) => (
                  <OptionRow key={o}><OptionDot />{o}</OptionRow>
                ))}
              </OptionList>
            </CardBody>
          </Card>
        </Cards>

        <SectionLabel $top={45}>Points of Interest (POIs)</SectionLabel>
        <Cards>
          <AddCard title="POI open x closed" />
          <AddCard title="Reviews" />
          <Card $deep><CardHead /></Card>
        </Cards>
      </Panel>
    </Page>
  );
}
